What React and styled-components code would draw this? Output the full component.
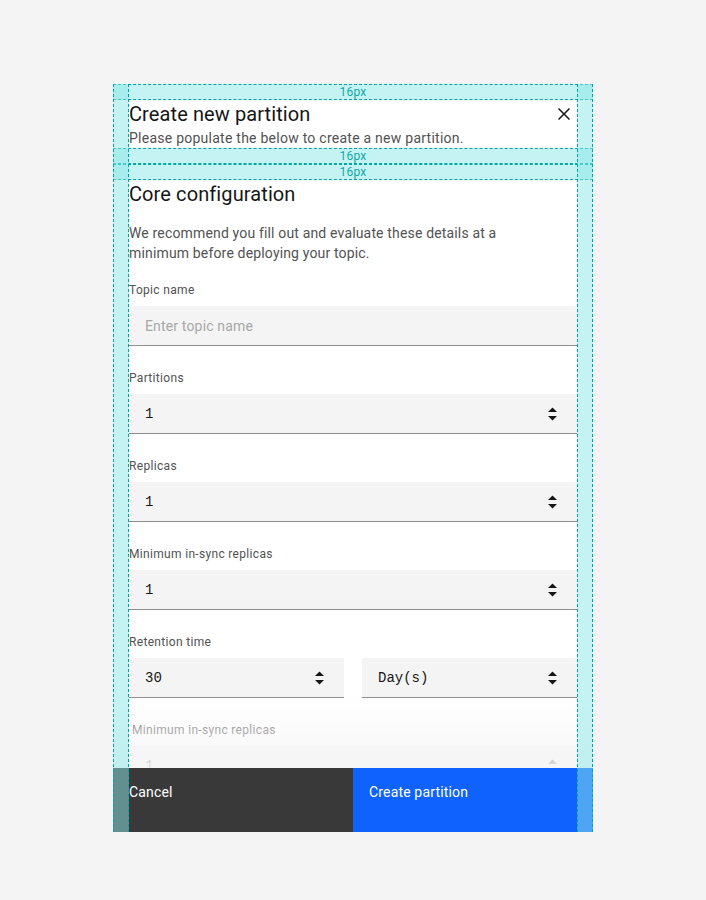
import React from "react";
import styled, { createGlobalStyle } from "styled-components";

const GlobalStyle = createGlobalStyle`
  body {
    margin: 0;
    background: #f4f4f4;
    font-family: Roboto, "Noto Sans", sans-serif;
    color: #161616;
  }
`;

const Modal = styled.div`
  position: relative;
  width: 480px;
  height: 748px;
  margin: 84px auto 0;
  background: #ffffff;
  display: flex;
  flex-direction: column;
`;

// spacing annotation (the cyan 16px bands)
const Band = styled.div`
  height: 16px;
  box-sizing: border-box;
  flex-shrink: 0;
  margin: ${({ bleed }) => (bleed ? "0 -16px" : "0")};
  border-top: 1px dashed #00a8a3;
  border-bottom: 1px dashed #00a8a3;
  background: rgba(140, 232, 232, 0.5);
  display: flex;
  align-items: center;
  justify-content: center;
  font-size: 12px;
  line-height: 14px;
  letter-spacing: 0.2px;
  color: #13aaa5;
`;

const Column = styled.div`
  position: absolute;
  top: 0;
  bottom: 0;
  ${({ side }) => (side === "left" ? "left: 0;" : "right: 0;")}
  width: 16px;
  box-sizing: border-box;
  border-left: 1px dashed #00a8a3;
  border-right: 1px dashed #00a8a3;
  background: rgba(140, 232, 232, 0.5);
  z-index: 5;
  pointer-events: none;
`;

const Header = styled.div`
  padding: 0 16px;
`;

const TitleRow = styled.div`
  display: flex;
  align-items: center;
  justify-content: space-between;
`;

const Title = styled.h2`
  margin: 0;
  font-size: 20px;
  line-height: 28px;
  font-weight: 400;
  letter-spacing: 0.1px;
  color: #161616;
`;

const CloseButton = styled.button`
  border: 0;
  padding: 0;
  margin-right: 1px;
  background: none;
  width: 24px;
  height: 24px;
  display: flex;
  color: #161616;
`;

const Subtitle = styled.p`
  margin: 0;
  font-size: 14px;
  line-height: 20px;
  letter-spacing: 0.25px;
  color: #525252;
`;

const Content = styled.div`
  position: relative;
  flex: 1;
  overflow: hidden;
  display: flex;
  flex-direction: column;
`;

const Body = styled.div`
  padding: 0 16px;
`;

const Heading = styled.h3`
  margin: 0;
  font-size: 20px;
  line-height: 28px;
  font-weight: 400;
  letter-spacing: 0.1px;
  color: #161616;
`;

const Intro = styled.p`
  margin: 15px 0 19px;
  padding-right: 48px;
  font-size: 14px;
  line-height: 20px;
  letter-spacing: 0.16px;
  color: #525252;
`;

const Field = styled.div`
  margin-bottom: 24px;
`;

const Label = styled.div`
  font-size: 12px;
  line-height: 16px;
  letter-spacing: 0.32px;
  color: #525252;
  margin-bottom: 8px;
  padding-left: ${({ indent }) => indent || 0}px;
`;

const Row = styled.div`
  display: grid;
  grid-template-columns: 1fr 1fr;
  column-gap: 18px;
`;

const Control = styled.div`
  height: 40px;
  box-sizing: border-box;
  background: #f4f4f4;
  border-bottom: 1px solid #8d8d8d;
  display: flex;
  align-items: center;
  padding: 0 20px 0 16px;
`;

const TextInput = styled.input`
  flex: 1;
  border: 0;
  outline: none;
  background: transparent;
  padding: 0;
  font-family: Roboto, "Noto Sans", sans-serif;
  font-size: 14px;
  letter-spacing: 0.16px;
  color: #161616;
  &::placeholder {
    color: #a8a8a8;
  }
`;

const Value = styled.span`
  flex: 1;
  font-family: "Liberation Mono", "DejaVu Sans Mono", monospace;
  font-size: 14px;
  color: #161616;
`;

const Fade = styled.div`
  position: absolute;
  left: 0;
  right: 0;
  bottom: 0;
  height: 72px;
  background: linear-gradient(
    to bottom,
    rgba(255, 255, 255, 0) 0%,
    rgba(248, 248, 248, 0.5) 45%,
    rgba(246, 246, 246, 0.9) 100%
  );
  pointer-events: none;
`;

const Footer = styled.div`
  display: flex;
  height: 64px;
  flex-shrink: 0;
`;

const FooterButton = styled.button`
  flex: 1;
  border: 0;
  margin: 0;
  padding: 15px 16px 0;
  text-align: left;
  display: flex;
  align-items: flex-start;
  font-family: Roboto, "Noto Sans", sans-serif;
  font-size: 14px;
  line-height: 18px;
  letter-spacing: 0.16px;
  color: #ffffff;
  background: ${({ primary }) => (primary ? "#0f62fe" : "#393939")};
`;

const CloseIcon = () => (
  <svg width="24" height="24" viewBox="0 0 32 32" fill="currentColor">
    <path d="M24 9.4L22.6 8 16 14.6 9.4 8 8 9.4 14.6 16 8 22.6 9.4 24 16 17.4 22.6 24 24 22.6 17.4 16 24 9.4z" />
  </svg>
);

const Spinner = () => (
  <svg width="9" height="14" viewBox="0 0 9 14" fill="#161616">
    <path d="M0 5 L4.5 0.5 L9 5 Z" />
    <path d="M0 9 L4.5 13.5 L9 9 Z" />
  </svg>
);

const NumberField = ({ label, value, indent }) => (
  <Field>
    <Label indent={indent}>{label}</Label>
    <Control>
      <Value>{value}</Value>
      <Spinner />
    </Control>
  </Field>
);

const App = () => {
  return (
    <>
      <GlobalStyle />
      <Modal>
        <Header>
          <Band bleed>16px</Band>
          <TitleRow>
            <Title>Create new partition</Title>
            <CloseButton aria-label="Close">
              <CloseIcon />
            </CloseButton>
          </TitleRow>
          <Subtitle>Please populate the below to create a new partition.</Subtitle>
          <Band bleed>16px</Band>
        </Header>
        <Content>
          <Band>16px</Band>
          <Body>
            <Heading>Core configuration</Heading>
            <Intro>
              We recommend you fill out and evaluate these details at a minimum before deploying
              your topic.
            </Intro>
            <Field>
              <Label>Topic name</Label>
              <Control>
                <TextInput placeholder="Enter topic name" readOnly />
              </Control>
            </Field>
            <NumberField label="Partitions" value="1" />
            <NumberField label="Replicas" value="1" />
            <NumberField label="Minimum in-sync replicas" value="1" />
            <Field>
              <Label>Retention time</Label>
              <Row>
                <Control>
                  <Value>30</Value>
                  <Spinner />
                </Control>
                <Control>
                  <Value>Day(s)</Value>
                  <Spinner />
                </Control>
              </Row>
            </Field>
            <NumberField label="Minimum in-sync replicas" value="1" indent={3} />
          </Body>
          <Fade />
        </Content>
        <Footer>
          <FooterButton>Cancel</FooterButton>
          <FooterButton primary>Create partition</FooterButton>
        </Footer>
        <Column side="left" />
        <Column side="right" />
      </Modal>
    </>
  );
};

export default App;
